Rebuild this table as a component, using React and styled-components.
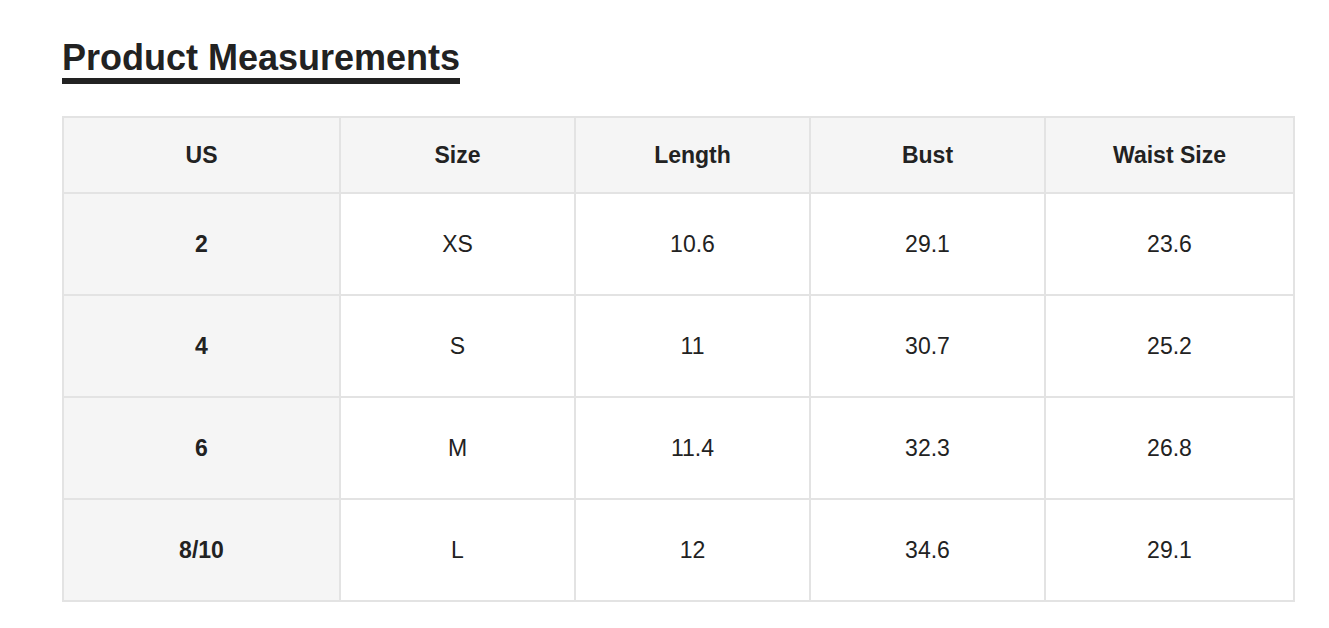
import React from 'react';
import styled, {createGlobalStyle} from 'styled-components';

const GlobalStyle = createGlobalStyle`
  html, body {
    margin: 0;
    padding: 0;
    background: #ffffff;
  }
  body {
    font-family: "Liberation Sans", Arial, sans-serif;
    color: #222222;
  }
`;

const Page = styled.div`
  padding: 38px 36px 24px 62px;
`;

const Title = styled.h2`
  display: inline-block;
  margin: 0;
  font-size: 36px;
  line-height: 40px;
  font-weight: 700;
  color: #222222;
  border-bottom: 6px solid #222222;
`;

const Table = styled.table`
  margin-top: 32px;
  width: 1231px;
  table-layout: fixed;
  border-collapse: collapse;
  border: 2px solid #e3e3e3;
`;

const HeadCell = styled.th`
  height: 74px;
  padding: 0;
  border: 2px solid #e3e3e3;
  background: #f5f5f5;
  font-size: 23px;
  font-weight: 700;
  text-align: center;
  vertical-align: middle;
`;

const Cell = styled.td`
  height: 100px;
  padding: 0;
  border: 2px solid #e3e3e3;
  background: ${props => (props.label ? '#f5f5f5' : '#ffffff')};
  font-size: 23px;
  font-weight: ${props => (props.label ? 700 : 400)};
  text-align: center;
  vertical-align: middle;
`;

const columns = [
  {title: 'US', width: 277},
  {title: 'Size', width: 235},
  {title: 'Length', width: 235},
  {title: 'Bust', width: 235},
  {title: 'Waist Size', width: 249}
];

const rows = [
  ['2', 'XS', '10.6', '29.1', '23.6'],
  ['4', 'S', '11', '30.7', '25.2'],
  ['6', 'M', '11.4', '32.3', '26.8'],
  ['8/10', 'L', '12', '34.6', '29.1']
];

const App = () => (
  <>
    <GlobalStyle />
    <Page>
      <Title>Product Measurements</Title>
      <Table>
        <colgroup>
          {columns.map(col => (
            <col key={col.title} style={{width: col.width}} />
          ))}
        </colgroup>
        <thead>
          <tr>
            {columns.map(col => (
              <HeadCell key={col.title}>{col.title}</HeadCell>
            ))}
          </tr>
        </thead>
        <tbody>
          {rows.map(row => (
            <tr key={row[0]}>
              {row.map((value, i) => (
                <Cell key={i} label={i === 0}>
                  {value}
                </Cell>
              ))}
            </tr>
          ))}
        </tbody>
      </Table>
    </Page>
  </>
);

export default App;
